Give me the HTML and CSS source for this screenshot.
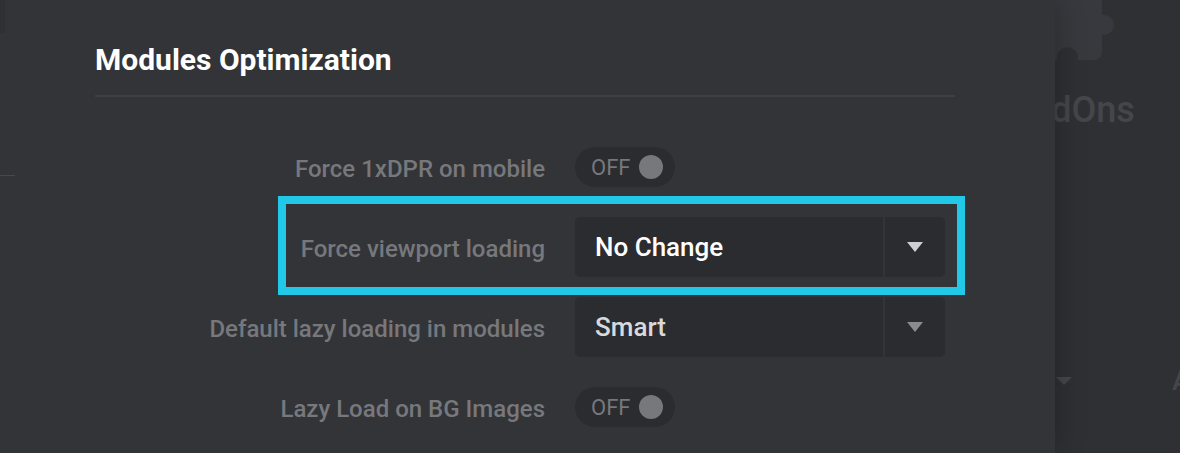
FILE: index.html
```html
<!DOCTYPE html>
<html lang="en">
<head>
    <meta charset="UTF-8">
    <title>Modules Optimization</title>
    <link rel="stylesheet" href="styles.css">
</head>
<body>
    <div class="page">
        <div class="panel">
            <span class="stray-block"></span>
            <span class="stray-line"></span>

            <h2 class="panel-title">Modules Optimization</h2>

            <div class="rows">
                <div class="row">
                    <label class="row-label">Force 1xDPR on mobile</label>
                    <div class="toggle">
                        <span class="toggle-text">OFF</span>
                        <span class="toggle-knob"></span>
                    </div>
                </div>
                <div class="row">
                    <label class="row-label">Force viewport loading</label>
                    <div class="select select-active">
                        <span class="select-value">No Change</span>
                        <span class="select-arrow"><span class="triangle"></span></span>
                    </div>
                </div>
                <div class="row">
                    <label class="row-label">Default lazy loading in modules</label>
                    <div class="select">
                        <span class="select-value">Smart</span>
                        <span class="select-arrow"><span class="triangle"></span></span>
                    </div>
                </div>
                <div class="row">
                    <label class="row-label">Lazy Load on BG Images</label>
                    <div class="toggle">
                        <span class="toggle-text">OFF</span>
                        <span class="toggle-knob"></span>
                    </div>
                </div>
            </div>

            <!-- Callout round the viewport row -->
            <div class="highlight"></div>
        </div>

        <div class="backdrop">
            <svg class="puzzle" width="70" height="60" viewBox="0 0 70 60">
                <path d="M0 0H47V15H49A10 10 0 1 1 49 35H47V52A8 8 0 0 1 39 60H23V55A11 11 0 0 0 2 55V60H0Z" fill="#38393e"/>
            </svg>
            <div class="backdrop-title">AddOns</div>
            <div class="backdrop-row">
                <span class="backdrop-arrow"></span>
                <span class="backdrop-letter">A</span>
            </div>
        </div>
    </div>
</body>
</html>
```

FILE: styles.css
```css
body {
    margin: 0;
    background-color: #2f3034;
    font-family: Roboto, "Liberation Sans", sans-serif;
}

.page {
    display: flex;
    width: 1180px;
    height: 453px;
    overflow: hidden;
}

/* Modal panel */
.panel {
    position: relative;
    z-index: 1;
    flex: 0 0 1055px;
    box-sizing: border-box;
    padding-left: 95px;
    background-color: #333438;
    box-shadow: 0 0 28px rgba(0, 0, 0, 0.28);
}

.stray-block {
    position: absolute;
    top: 0;
    left: 0;
    width: 5px;
    height: 33px;
    background-color: #2f3034;
}

.stray-line {
    position: absolute;
    top: 175px;
    left: 0;
    width: 15px;
    height: 1px;
    background-color: #47484c;
}

.panel-title {
    width: 860px;
    height: 97px;
    box-sizing: border-box;
    margin: 0;
    padding-top: 43px;
    border-bottom: 2px solid #3e3f44;
    color: #ffffff;
    font-size: 30px;
    font-weight: 700;
    line-height: 34px;
}

.rows {
    padding-top: 40px;
}

.row {
    display: flex;
    align-items: center;
    gap: 30px;
    height: 60px;
    margin-bottom: 20px;
}

.row-label {
    width: 450px;
    padding-top: 3px;
    color: #77787c;
    font-size: 24px;
    font-weight: 500;
    text-align: right;
}

/* Toggle */
.toggle {
    display: flex;
    align-items: center;
    gap: 9px;
    width: 100px;
    height: 40px;
    box-sizing: border-box;
    padding-left: 16px;
    border-radius: 20px;
    background-color: #2b2c30;
}

.toggle-text {
    color: #77787c;
    font-size: 22px;
    font-weight: 400;
}

.toggle-knob {
    width: 24px;
    height: 24px;
    border-radius: 50%;
    background-color: #77787c;
}

/* Select */
.select {
    display: flex;
    width: 370px;
    height: 60px;
    border-radius: 5px;
    background-color: #2b2c30;
}

.select-value {
    flex: 1;
    padding-left: 20px;
    color: #d9d9dc;
    font-size: 26px;
    font-weight: 500;
    line-height: 60px;
}

.select-active .select-value {
    color: #ffffff;
}

.select-arrow {
    display: flex;
    align-items: center;
    justify-content: center;
    width: 60px;
    border-left: 2px solid #333438;
}

.triangle {
    border-top: 10px solid #8a8b8e;
    border-left: 8px solid transparent;
    border-right: 8px solid transparent;
}

.select-active .triangle {
    border-top-color: #cfcfd2;
}

.highlight {
    position: absolute;
    top: 196px;
    left: 278px;
    width: 687px;
    height: 99px;
    box-sizing: border-box;
    border: 8px solid #22c8e8;
}

/* Dimmed page behind the panel */
.backdrop {
    flex: 1;
    overflow: hidden;
}

.puzzle {
    display: block;
}

.backdrop-title {
    margin: 30px 0 0 -48px;
    color: #45464b;
    font-size: 36px;
    font-weight: 500;
    line-height: 40px;
    white-space: nowrap;
}

.backdrop-row {
    display: flex;
    justify-content: space-between;
    align-items: center;
    margin-top: 234px;
    padding-left: 1px;
}

.backdrop-arrow {
    border-top: 8px solid #45464b;
    border-left: 8px solid transparent;
    border-right: 8px solid transparent;
}

.backdrop-letter {
    width: 8px;
    color: #45464b;
    font-size: 28px;
    font-weight: 500;
    white-space: nowrap;
}
```
